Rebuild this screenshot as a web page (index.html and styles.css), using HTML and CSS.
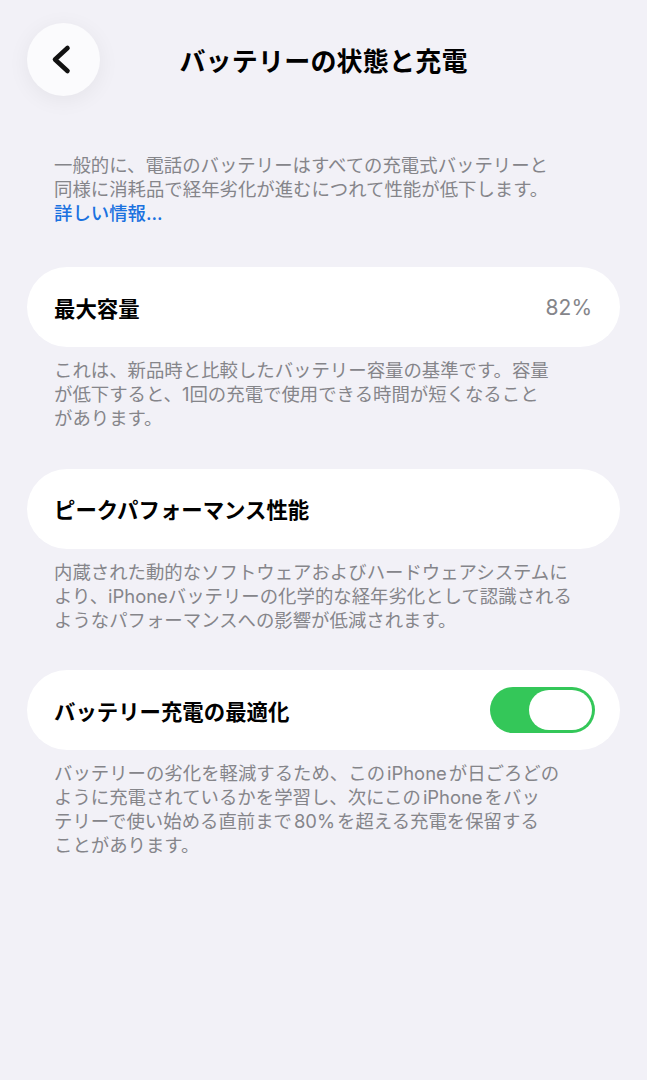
FILE: index.html
```html
<!DOCTYPE html>
<html lang="ja">
<head>
    <meta charset="UTF-8">
    <meta name="viewport" content="width=device-width, initial-scale=1.0">
    <title>バッテリーの状態と充電</title>
    <link rel="stylesheet" href="styles.css">
</head>
<body>
    <div class="container">
        <div class="header">
            <button class="back-button" aria-label="戻る">
                <svg width="73" height="73" viewBox="0 0 73 73">
                    <polyline points="40.5,25 28,36.5 40.5,48" fill="none" stroke="#111" stroke-width="4.6" stroke-linecap="round" stroke-linejoin="round"/>
                </svg>
            </button>
            <h1>バッテリーの状態と充電</h1>
            <span></span>
        </div>

        <p class="intro">
            一般的に、電話のバッテリーはすべての充電式バッテリーと<br>
            同様に消耗品で経年劣化が進むにつれて性能が低下します。<br>
            <a href="#" class="more-link">詳しい情報...</a>
        </p>

        <div class="cell">
            <span class="cell-label">最大容量</span>
            <span class="cell-value">82%</span>
        </div>
        <p class="cell-footer">
            これは、新品時と比較したバッテリー容量の基準です。容量<br>
            が低下すると、1回の充電で使用できる時間が短くなること<br>
            があります。
        </p>

        <div class="cell">
            <span class="cell-label">ピークパフォーマンス性能</span>
        </div>
        <p class="cell-footer">
            内蔵された動的なソフトウェアおよびハードウェアシステムに<br>
            より、iPhoneバッテリーの化学的な経年劣化として認識される<br>
            ようなパフォーマンスへの影響が低減されます。
        </p>

        <div class="cell cell-toggle">
            <span class="cell-label">バッテリー充電の最適化</span>
            <label class="switch">
                <input type="checkbox" checked>
                <span class="thumb"></span>
            </label>
        </div>
        <p class="cell-footer">
            バッテリーの劣化を軽減するため、この<span class="latin">iPhone</span>が日ごろどの<br>
            ように充電されているかを学習し、次にこの<span class="latin">iPhone</span>をバッ<br>
            テリーで使い始める直前まで<span class="latin">80%</span>を超える充電を保留する<br>
            ことがあります。
        </p>
    </div>
</body>
</html>
```

FILE: styles.css
```css
/* 基本 */
body {
    margin: 0;
    padding: 0;
    font-family: Inter, "Noto Sans CJK JP", sans-serif;
    background: #f2f1f7;
    color: #000;
}

.container {
    width: 100%;
    min-height: 100vh;
    padding: 23px 27px 40px;
    box-sizing: border-box;
}

/* ヘッダー */
.header {
    display: grid;
    grid-template-columns: 73px 1fr 73px;
    align-items: center;
}

.back-button {
    width: 73px;
    height: 73px;
    padding: 0;
    border: none;
    border-radius: 50%;
    background: #fbfbfd;
    box-shadow: 0 4px 22px rgba(0, 0, 0, 0.06);
    display: flex;
    cursor: pointer;
}

.header h1 {
    margin: 0;
    text-align: center;
    font-size: 26px;
    font-weight: 700;
    letter-spacing: 0.2px;
}

/* 説明文 */
.intro,
.cell-footer {
    margin: 0;
    padding: 0 27px;
    font-size: 18.4px;
    line-height: 24px;
    color: #85858a;
}

.intro {
    margin-top: 57px;
    margin-bottom: 42px;
}

.more-link {
    color: #1b72e0;
    text-decoration: none;
    font-weight: 500;
}

.latin {
    margin: 0 2px;
}

/* セル */
.cell {
    height: 80px;
    padding: 0 28px 0 27px;
    box-sizing: border-box;
    background: #fff;
    border-radius: 40px;
    display: flex;
    align-items: center;
    justify-content: space-between;
}

.cell-label {
    font-size: 21.4px;
    font-weight: 700;
}

.cell-value {
    font-size: 21px;
    color: #85858a;
}

.cell-footer {
    margin-top: 11px;
    margin-bottom: 38.5px;
}

.cell-toggle {
    padding-right: 25px;
}

/* スイッチ */
.switch {
    position: relative;
    width: 105px;
    height: 46px;
    border-radius: 23px;
    background: #34c759;
    display: block;
}

.switch input {
    display: none;
}

.switch .thumb {
    position: absolute;
    top: 3px;
    right: 3px;
    width: 63px;
    height: 40px;
    border-radius: 20px;
    background: #fff;
}
```
